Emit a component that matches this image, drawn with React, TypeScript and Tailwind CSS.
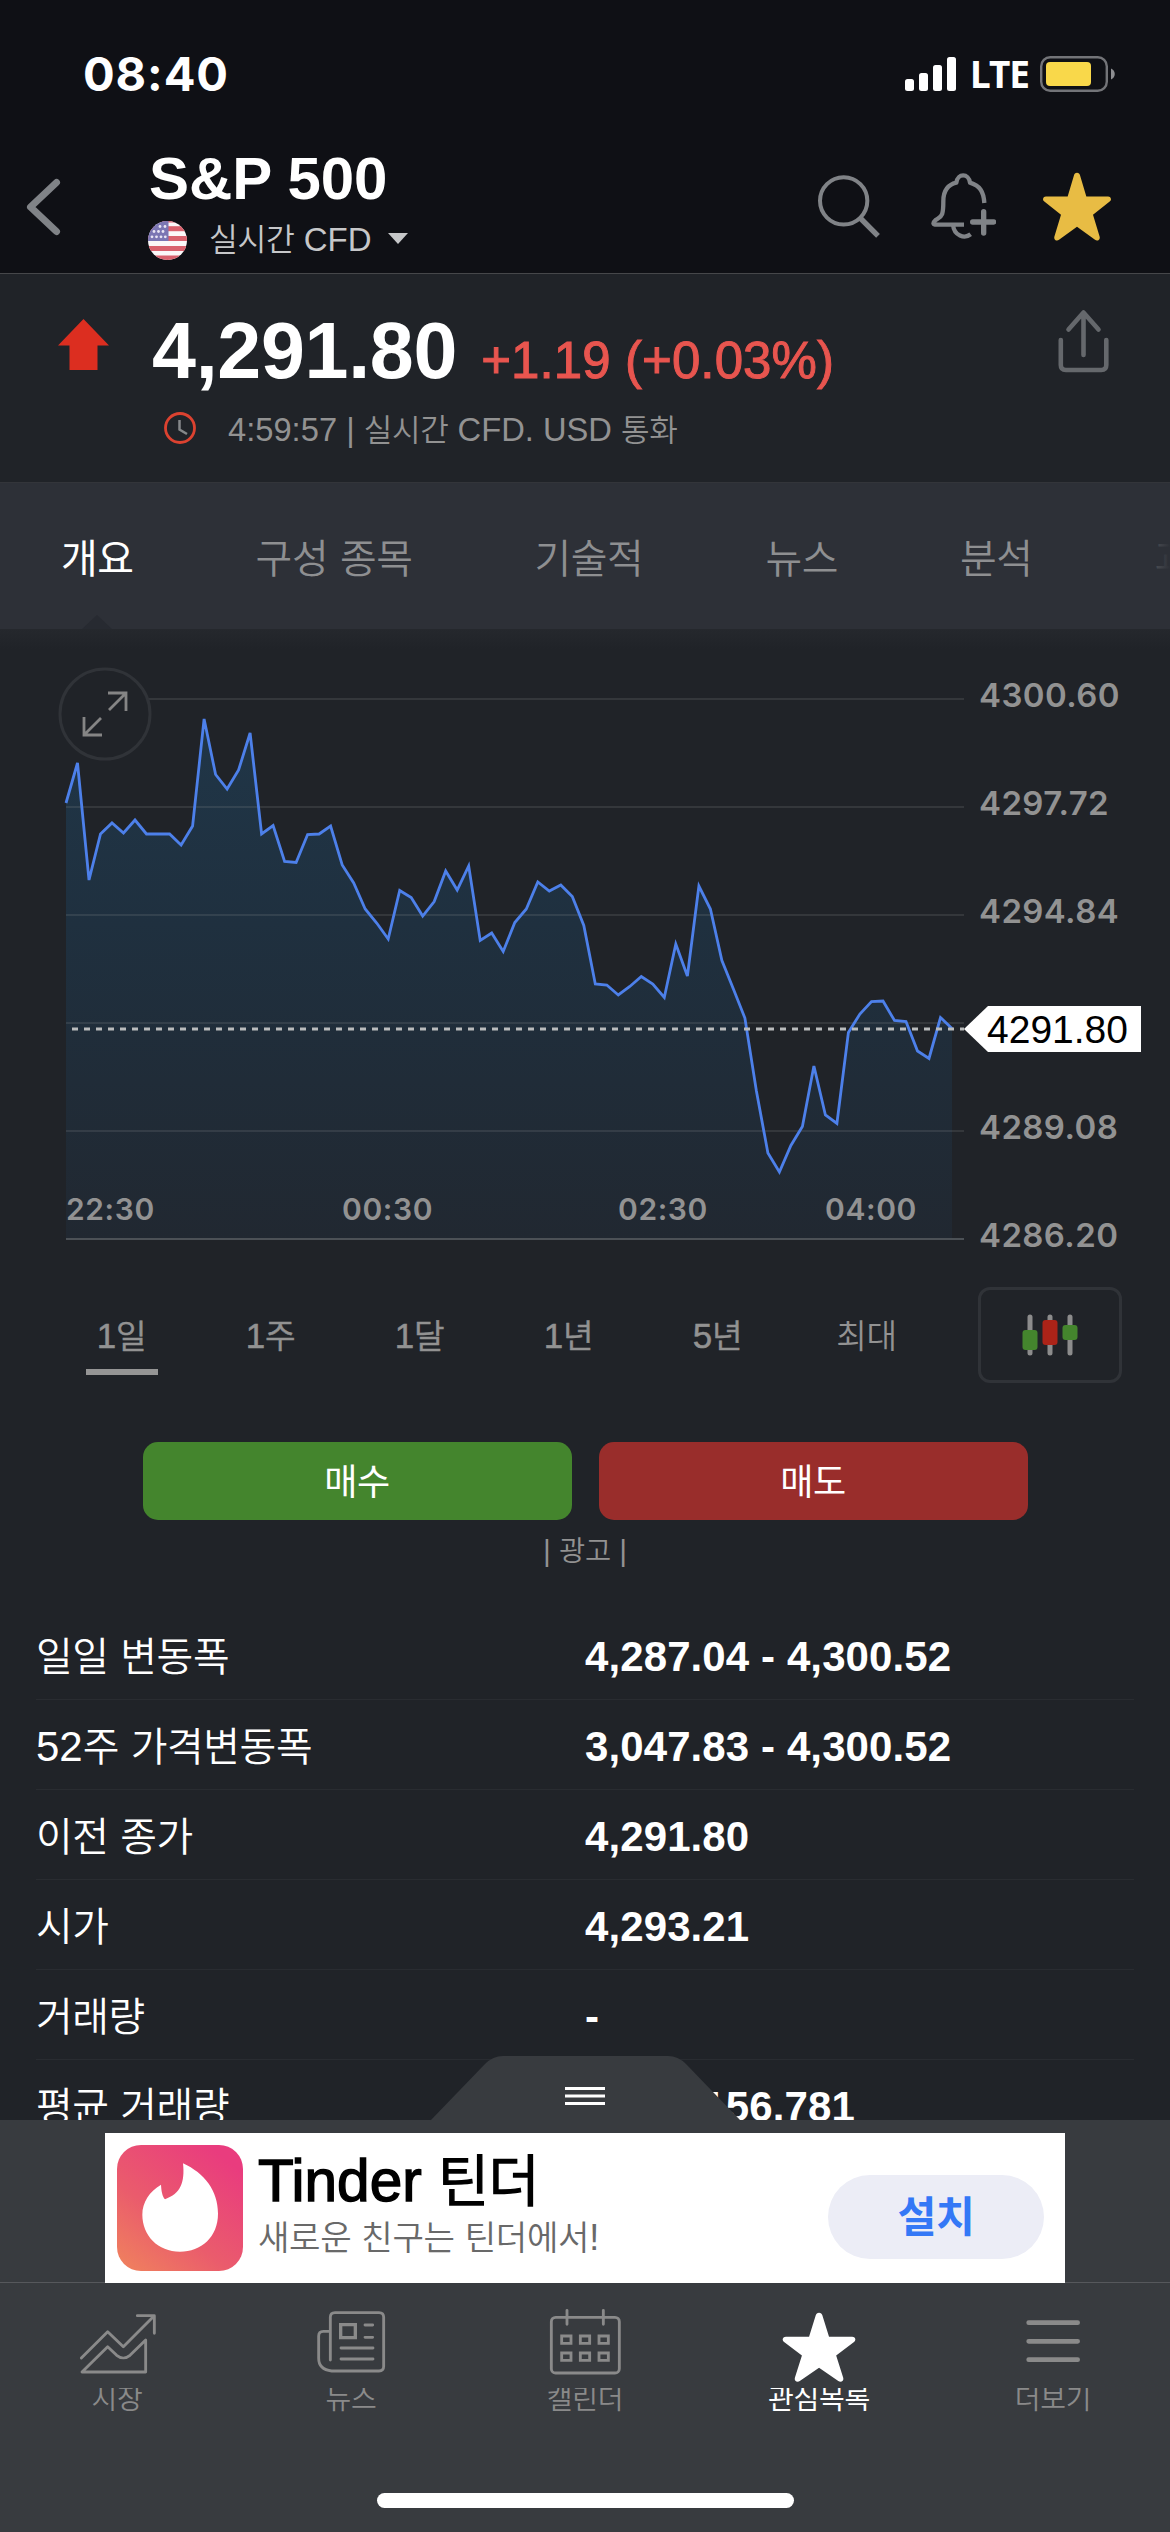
import { Fragment, type ReactNode } from "react";
import clsx from "clsx";

// Hangul glyphs are set a little tighter than the Latin text beside them
function Ko({ children, className = "font-[350]" }: { children: string; className?: string }) {
  return (
    <>
      {children.split(/([\uac00-\ud7a3]+)/).map((part, i) =>
        i % 2 ? (
          <span key={i} className={clsx("text-[0.95em] tracking-[-0.01em]", className)}>
            {part}
          </span>
        ) : (
          <Fragment key={i}>{part}</Fragment>
        )
      )}
    </>
  );
}

const STAR =
  "M102 2c5 0 8 3 9 7l19 64h65c9 0 12 10 5 15l-50 40 20 66c2 9-7 14-14 9l-54-39-54 39c-7 5-16 0-14-9l20-66-50-40c-7-5-4-15 5-15h65L93 9c1-4 4-7 9-7z";

function StatusBar() {
  return (
    <div className="flex h-[137px] items-start justify-between pl-[83px] pr-[54px]">
      <span className="mt-[50px] font-['Inter'] text-[47px] leading-[48px] font-bold tracking-[0.9px] text-white">
        08:40
      </span>
      <div className="mt-[56px] flex h-9 items-center">
        <div className="mr-[14px] flex h-[34px] items-end gap-[5px]">
          <i className="h-3 w-[9px] rounded-[2.5px] bg-white" />
          <i className="h-[18px] w-[9px] rounded-[2.5px] bg-white" />
          <i className="h-[26px] w-[9px] rounded-[2.5px] bg-white" />
          <i className="h-[34px] w-[9px] rounded-[2.5px] bg-white" />
        </div>
        <span className="mr-[14px] w-[56px] font-['Noto_Sans'] text-[37px] leading-9 font-bold tracking-[-1px] text-white">
          LTE
        </span>
        <svg width="76" height="36" viewBox="0 0 76 36">
          <rect x="1.2" y="1.2" width="65.6" height="33.6" rx="9" fill="none" stroke="#737478" strokeWidth="2.4" />
          <rect x="6" y="6" width="45" height="24" rx="4" fill="#f9d84a" />
          <path d="M71 12.5c5 2 5 9 0 11z" fill="#8d8e91" />
        </svg>
      </div>
    </div>
  );
}

function Flag() {
  return (
    <svg width="39" height="39" viewBox="0 0 39 39">
      <clipPath id="flag">
        <circle cx="19.5" cy="19.5" r="19.5" />
      </clipPath>
      <g clipPath="url(#flag)">
        <rect width="39" height="39" fill="#fbf7f8" />
        {[0, 5.2, 15, 25, 34.5].map((y) => (
          <rect key={y} y={y} width="39" height={y ? 5 : 1.5} fill="#d9616d" />
        ))}
        <rect width="20.5" height="20" fill="#7b76b3" />
        {[
          [12, 5.5], [17, 5.5], [6, 10.5], [10.5, 10.5], [15, 10.5],
          [4, 15.8], [8.5, 15.8], [13, 15.8], [17.3, 15.8],
        ].map(([x, y]) => (
          <circle key={`${x}-${y}`} cx={x} cy={y} r="1.4" fill="#e9e6f4" />
        ))}
      </g>
    </svg>
  );
}

function Header() {
  return (
    <header className="h-[274px] border-b border-[#46474a] bg-[#0f1015]">
      <StatusBar />
      <div className="flex h-[136px] pl-[26px] pr-[59px]">
        <svg className="mt-[41px]" width="36" height="58" viewBox="0 0 36 58">
          <path d="M30.500 4.500 4.500 29l26 24.500" fill="none" stroke="#808387" strokeWidth="7" strokeLinecap="round" strokeLinejoin="round" />
        </svg>
        <div className="ml-[86px] flex-1 pt-3">
          <h1 className="pl-[1px] text-[60px] leading-[60px] font-bold tracking-[-0.1px] text-white">S&amp;P 500</h1>
          <div className="mt-[11px] flex h-10 items-center">
            <Flag />
            <span className="ml-[22px] text-[33px] leading-10 text-[#c6c7c9]">
              <Ko>실시간 CFD</Ko>
            </span>
            <svg className="ml-[16px] -mt-[3px]" width="20" height="11" viewBox="0 0 20 11">
              <path d="M0 0h20L10 11z" fill="#c6c7c9" />
            </svg>
          </div>
        </div>
        <div className="flex h-[138px] items-center">
          <svg width="62" height="63" viewBox="0 0 186 188" fill="none" stroke="#808387">
            <circle cx="77" cy="77" r="71" strokeWidth="12" />
            <path d="M128 130l52 52" strokeWidth="16" />
          </svg>
          <svg className="ml-[51px]" width="65" height="66" viewBox="0 0 195 196" fill="none" stroke="#808387" strokeWidth="13">
            <path d="M160 89c-2-34-13-52-43-61-4-29-37-29-41 0-28 7-39 26-39 55 0 50-6 44-24 58-9 8-7 13 4 13h82" strokeLinejoin="round" />
            <path d="M66 154c3 34 35 43 53 29" />
            <path d="M158 115v64M125 146h63" strokeWidth="16" strokeLinecap="round" />
          </svg>
          <svg className="ml-[47px]" width="68" height="69" viewBox="0 0 204 206">
            <path d={STAR} fill="#e8bc44" />
          </svg>
        </div>
      </div>
    </header>
  );
}

function Quote() {
  return (
    <section className="flex h-[208px] pl-[58px] pr-[61px]">
      <svg className="mt-[45px]" width="51" height="51" viewBox="0 0 51 51">
        <path d="M25.500 0 51 26.500H39.500V51h-28V26.500H0z" fill="#dc2e20" />
      </svg>
      <div className="ml-[43px] flex-1 pt-[37px]">
        <div className="flex h-20 items-baseline">
          <span className="text-[79px] leading-[80px] font-bold tracking-[-0.3px] text-white">4,291.80</span>
          <span className="ml-[24px] text-[51px] leading-[80px] tracking-[0.1px] text-[#e8554f] [-webkit-text-stroke:1px_#e8554f]">
            +1.19 (+0.03%)
          </span>
        </div>
        <div className="mt-[19px] flex h-10 items-center pl-[12px]">
          <svg className="-mt-[5px]" width="32" height="32" viewBox="0 0 32 32" fill="none">
            <circle cx="16" cy="16" r="14.500" stroke="#dc4230" strokeWidth="2.800" />
            <path d="M15.500 8v9.500l7.500 4.500" stroke="#85888a" strokeWidth="2.500" />
          </svg>
          <span className="ml-[32px] text-[32.700px] leading-10 text-[#929292]">
            <Ko>4:59:57 | 실시간 CFD. USD 통화</Ko>
          </span>
        </div>
      </div>
      <svg className="mt-[35px]" width="51" height="64" viewBox="0 0 51 64" fill="none" stroke="#65686c" strokeWidth="4.600" strokeLinecap="round" strokeLinejoin="round">
        <path d="M10.500 20.500 25.500 3.500l15 17M25.500 5v41M2.800 31v25q0 5 5 5h35.500q5 0 5-5V31" />
      </svg>
    </section>
  );
}

const tabs = ["개요", "구성 종목", "기술적", "뉴스", "분석", "과거 데이터"];

function Tabs() {
  return (
    <nav className="relative flex h-[147px] items-center gap-[122px] overflow-hidden border-t border-[#33353a] bg-[#2d3037] pl-[61px] pt-[5px] text-[42px] leading-[50px] whitespace-nowrap text-[#8e8f91]">
      {tabs.map((tab, i) => (
        <span key={tab} className={clsx("shrink-0", i === 0 && "text-white")}>
          <Ko className={i === 0 ? "font-normal" : "font-[350]"}>{tab}</Ko>
        </span>
      ))}
      <div className="absolute inset-y-0 right-0 w-[50px] bg-gradient-to-l from-[#2d3037] to-transparent" />
      <svg className="absolute bottom-0 left-[82px]" width="30" height="14" viewBox="0 0 30 14">
        <path d="M0 14 15 0l15 14z" fill="#272a31" />
      </svg>
    </nav>
  );
}

// Line heights inside the plot, top gridline = 0, bottom gridline = 540
const prices = [
  104, 64, 181, 135, 124, 134, 121, 135, 135, 135, 146, 127, 20, 75.5, 90, 71, 34, 135, 126.5, 162.5, 163.5, 135.5,
  135, 127, 166, 184, 210, 224, 240, 191.5, 198.5, 217, 202.5, 172, 191, 167, 241.5, 234, 252.5, 223.5, 210, 183,
  192, 186, 197.5, 226.5, 285, 286, 296, 287.5, 277.5, 285, 298.5, 245, 277, 187, 210, 261.5, 290, 319, 392, 454, 473,
  446.5, 427.5, 367, 416, 424.5, 333.5, 315, 302.5, 302, 321.5, 322.5, 352, 359.5, 318.5, 329.5,
];

const scale: [string, number][] = [
  ["4300.60", 0],
  ["4297.72", 108],
  ["4294.84", 216],
  ["4289.08", 432],
  ["4286.20", 540],
];

const times: [string, number][] = [
  ["22:30", 66],
  ["00:30", 342],
  ["02:30", 618],
  ["04:00", 825],
];

function Chart() {
  const step = 886 / (prices.length - 1);
  const line = prices.map((p, i) => `${(66 + i * step).toFixed(1)},${p + 70}`).join(" ");
  return (
    <svg width="1170" height="641" viewBox="0 0 1170 641" className="block">
      <defs>
        <linearGradient id="area" x1="0" y1="85" x2="0" y2="610" gradientUnits="userSpaceOnUse">
          <stop offset="0" stopColor="#203648" />
          <stop offset="0.4" stopColor="#1f303f" />
          <stop offset="1" stopColor="#212831" />
        </linearGradient>
        <linearGradient id="shade" x1="0" y1="0" x2="0" y2="1">
          <stop offset="0" stopColor="#25282d" />
          <stop offset="1" stopColor="#202328" />
        </linearGradient>
      </defs>
      <rect width="1170" height="20" fill="url(#shade)" />
      <polygon points={`66,610 ${line} 952,610`} fill="url(#area)" />
      {[70, 178, 286, 394, 502].map((y) => (
        <path key={y} d={`M66 ${y}H964`} stroke="#a0a0a0" strokeOpacity="0.22" strokeWidth="1.500" />
      ))}
      <path d="M66 610H964" stroke="#4c5156" strokeWidth="2" />
      <polyline points={line} fill="none" stroke="#4d80ea" strokeWidth="2.800" />
      <path d="M72 400H964" stroke="#b9bbbc" strokeWidth="3" strokeDasharray="6 6" />
      <circle cx="105" cy="85" r="45" fill="#202328" stroke="#303338" strokeWidth="3" />
      <path d="M108 64h18v18M126 64l-17 17M102 106H84V88M84 106l17-17" fill="none" stroke="#858585" strokeWidth="2.800" />
      <g fill="#929292" fontFamily="Inter" fontWeight="600">
        {scale.map(([label, y]) => (
          <text key={label} x="979" y={y + 78} fontSize="33" letterSpacing="0.4">
            {label}
          </text>
        ))}
        {times.map(([label, x]) => (
          <text key={label} x={x} y="591" fontSize="30" letterSpacing="0.6">
            {label}
          </text>
        ))}
      </g>
      <path d="M964 400l24-23h153v46H988z" fill="#fff" />
      <text x="987" y="414" fontSize="39" fontFamily="Liberation Sans" fill="#000">
        4291.80
      </text>
    </svg>
  );
}

const periods = ["1일", "1주", "1달", "1년", "5년", "최대"];

function Periods() {
  return (
    <div className="mt-[17px] flex h-24 pl-[47px] pr-[48px]">
      {periods.map((p, i) => (
        <div key={p} className="flex w-[149px] flex-col items-center text-[35px] leading-[40px] text-[#929292]">
          <span className={clsx("mt-[29px]", i < 5 && "[-webkit-text-stroke:0.5px_#929292]")}>
            <Ko className="font-[350]">{p}</Ko>
          </span>
          {i === 0 && <div className="mt-3 h-[6px] w-[72px] bg-[#959595]" />}
        </div>
      ))}
      <button className="ml-auto flex h-24 w-36 items-center justify-center rounded-[12px] border-[3px] border-[#303338]">
        <svg width="58" height="42" viewBox="0 0 58 42">
          <path d="M9 3v36M29 3v36M49 3v36" stroke="#8c8c8c" strokeWidth="5" strokeLinecap="round" />
          <rect x="1.500" y="16" width="15" height="20" rx="3" fill="#44852d" />
          <rect x="21.500" y="6" width="15" height="25" rx="3" fill="#ab2318" />
          <rect x="41.500" y="11" width="15" height="15" rx="3" fill="#44852d" />
        </svg>
      </button>
    </div>
  );
}

const rows = [
  ["일일 변동폭", "4,287.04 - 4,300.52"],
  ["52주 가격변동폭", "3,047.83 - 4,300.52"],
  ["이전 종가", "4,291.80"],
  ["시가", "4,293.21"],
  ["거래량", "-"],
  ["평균 거래량", "2,456,156.781"],
];

function Stats() {
  return (
    <dl className="mt-[40px] h-[510px] overflow-hidden px-9">
      {rows.map(([label, value]) => (
        <div key={label} className="flex h-[90px] items-center border-b border-[#292c31] pt-[5px] text-[42px] leading-[50px] text-white">
          <dt className="w-[549px]">
            <Ko>{label}</Ko>
          </dt>
          <dd className="font-bold tracking-[0.1px]">{value}</dd>
        </div>
      ))}
    </dl>
  );
}

function Ad() {
  return (
    <div className="relative flex h-[163px] justify-center border-b border-[#56585c] bg-[#383b3f] pt-[13px]">
      <svg className="absolute -top-16 left-[430px]" width="311" height="65" viewBox="0 0 311 65">
        <path d="M0 65 55 8q8-8 18-8h165q10 0 18 8l55 57z" fill="#383b3f" />
        <path d="M135 32.500h40M135 40h40M135 47.500h40" stroke="#fff" strokeWidth="2.800" />
      </svg>
      <div className="flex h-[150px] w-[960px] bg-white p-3">
        <svg width="126" height="126" viewBox="0 0 378 378">
          <defs>
            <linearGradient id="tinder" x1="0.850" y1="0.100" x2="0.150" y2="1">
              <stop offset="0" stopColor="#e93c7e" />
              <stop offset="0.600" stopColor="#ea5c6c" />
              <stop offset="1" stopColor="#ef7d5f" />
            </linearGradient>
          </defs>
          <rect width="378" height="378" rx="72" fill="url(#tinder)" />
          <path d="M198 55c65 30 105 82 105 151 0 69-50 114-114 114-66 0-113-49-113-111 0-38 22-70 56-90 1 19 4 35 12 44 47-17 60-51 54-108z" fill="#fff" />
        </svg>
        <div className="ml-[15px] flex-1">
          <div className="mt-[6px] text-[58.500px] leading-[60px] text-black [-webkit-text-stroke:1.4px_#000]">
            <Ko>Tinder 틴더</Ko>
          </div>
          <div className="mt-[7px] text-[36px] leading-[38px] text-[#696969]">
            <Ko>새로운 친구는 틴더에서!</Ko>
          </div>
        </div>
        <button className="mt-[30px] mr-[9px] h-[84px] w-[216px] rounded-full bg-[#ecedf6] text-[44.500px] leading-[84px] font-bold text-[#3478f6]">
          <Ko className="font-bold">설치</Ko>
        </button>
      </div>
    </div>
  );
}

// Tab bar drawings use three units to a pixel
function NavItem({ label, active, children }: { label: string; active?: boolean; children: ReactNode }) {
  return (
    <div className={clsx("flex flex-1 flex-col items-center", active ? "text-white" : "text-[#8a8a8a]")}>
      <svg className="mt-[26px] overflow-visible" width="80" height="75" viewBox="0 0 240 225" fill="none" stroke="#8a8a8a" strokeWidth="8.500" strokeLinecap="round" strokeLinejoin="round">
        {children}
      </svg>
      <div className="mt-[4px] h-6 overflow-hidden">
        <div className="-mt-[6px] text-[29.500px] leading-[34px]">
          <Ko className={active ? "font-normal" : "font-[350]"}>{label}</Ko>
        </div>
      </div>
    </div>
  );
}

function BottomNav() {
  return (
    <footer className="h-[249px] bg-[#383b3f]">
      <div className="flex h-[210px]">
        <NavItem label="시장">
          <path d="M13 147 92 68l47 45 92-92M181 20h51v53" />
          <path d="M15 189 92 113l27 26c12 10 28 10 40 0l47-46v96z" />
        </NavItem>
        <NavItem label="뉴스">
          <path d="M58 153V25q0-14 14-14h132q14 0 14 14v147q0 14-14 14H62Q23 182 23 148V81q0-14 14-14h18" />
          <path d="M89 47h44v39H89z" strokeWidth="10" strokeLinejoin="miter" />
          <path d="M162 48h23M162 85h23M90 117h96M90 150h96" />
        </NavItem>
        <NavItem label="캘린더">
          <rect x="19" y="25" width="204" height="167" rx="13" />
          <path d="M66 4v42M175 4v42" />
          {[50, 106, 162].map((x) => (
            <g key={x} strokeLinejoin="miter">
              <path d={`M${x} 81h28v22H${x}z`} />
              <path d={`M${x} 132h28v22H${x}z`} />
            </g>
          ))}
        </NavItem>
        <NavItem label="관심목록" active>
          <path d={STAR} transform="translate(11 9) scale(1.070 1.020)" fill="#fff" stroke="none" />
        </NavItem>
        <NavItem label="더보기">
          <path d="M47 41h147M47 97h147M47 152h147" strokeWidth="14" />
        </NavItem>
      </div>
      <div className="mx-auto h-[15px] w-[417px] rounded-full bg-white" />
    </footer>
  );
}

export default function App() {
  return (
    <div className="h-[2532px] w-[1170px] overflow-hidden bg-[#202328] font-['Liberation_Sans','Noto_Sans_CJK_KR',sans-serif]">
      <Header />
      <Quote />
      <Tabs />
      <Chart />
      <Periods />
      <div className="mt-[59px] flex h-[78px] justify-center gap-[27px] text-[38px] text-white">
        <button className="w-[429px] rounded-[15px] bg-[#44852d] pt-[2px]">
          <Ko className="font-normal">매수</Ko>
        </button>
        <button className="w-[429px] rounded-[15px] bg-[#992d2b] pt-[2px]">
          <Ko className="font-normal">매도</Ko>
        </button>
      </div>
      <div className="mt-[12px] h-[38px] text-center text-[30px] leading-[38px] text-[#929292]">
        <Ko>| 광고 |</Ko>
      </div>
      <Stats />
      <Ad />
      <BottomNav />
    </div>
  );
}
